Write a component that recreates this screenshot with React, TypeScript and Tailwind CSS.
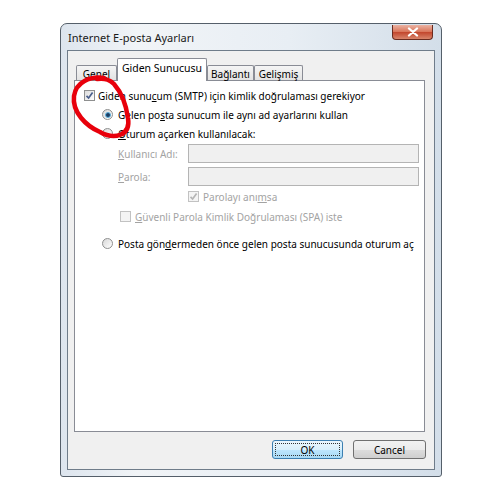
import React from 'react';

function CheckBox({ checked, disabled }: { checked?: boolean; disabled?: boolean }) {
  return (
    <span
      className={`flex h-[11px] w-[11px] shrink-0 items-center justify-center border ${
        disabled ? 'border-[#c2c2c2] bg-[#f4f4f4]' : 'border-[#8e8f8f] bg-[linear-gradient(135deg,#dcdcdc,#ffffff)]'
      }`}
    >
      {checked && (
        <svg width="9" height="9" viewBox="0 0 9 9">
          <path
            d="M1.5 4.8 L3.6 7 L7.6 1.6"
            fill="none"
            stroke={disabled ? '#b5b5b5' : '#4a5f8c'}
            strokeWidth="1.7"
          />
        </svg>
      )}
    </span>
  );
}

function Radio({ checked }: { checked?: boolean }) {
  return (
    <span className="flex h-[11px] w-[11px] shrink-0 items-center justify-center rounded-full border border-[#8e8f8f] bg-[linear-gradient(135deg,#d8d8d8,#ffffff)]">
      {checked && (
        <span className="h-[6px] w-[6px] rounded-full border border-[#5fb3e0] bg-[#1b3d63]" />
      )}
    </span>
  );
}

function Tab({ label, active, w }: { label: string; active?: boolean; w: string }) {
  if (active) {
    return (
      <div
        className={`${w} relative z-10 -mb-px flex h-[23px] items-start justify-center rounded-t-[2px] border border-b-0 border-[#898c95] bg-white pt-[4px] text-[10.5px]`}
      >
        {label}
      </div>
    );
  }
  return (
    <div
      className={`${w} flex h-[15px] items-center justify-center rounded-t-[2px] border border-b-0 border-[#898c95] bg-[linear-gradient(#f5f5f5,#e3e3e3)] pt-px`}
    >
      {label}
    </div>
  );
}

export default function App() {
  return (
    <div className="relative h-[500px] w-[500px] bg-white pl-[60px] pt-[23px] font-['Noto_Sans',sans-serif] text-[10px] leading-none text-black">
      <div className="flex h-[454px] w-[382px] flex-col rounded-t-[7px] rounded-b-[3px] border border-[#555f6a] bg-[linear-gradient(90deg,#dde5ee,#f1f4f7_20%,#e8eef4_60%,#d3dee9)]">
        {/* title bar */}
        <div className="flex h-[26px] items-start justify-between pl-[7px]">
          <span className="mt-[8px] text-[11px] text-[#1a1a1a]">Internet E-posta Ayarları</span>
          <div className="mr-[8px] mt-px flex h-[15px] w-[41px] items-center justify-center rounded-b-[4px] border border-t-0 border-[#6a2b1f] bg-[linear-gradient(#eab2a2,#d97358_50%,#c2452c_51%,#d9856b)]">
            <svg width="12" height="10" viewBox="0 0 12 10">
              <path d="M2 1.5 L10 8.5 M10 1.5 L2 8.5" stroke="#ffffff" strokeWidth="2.3" strokeLinecap="round" />
            </svg>
          </div>
        </div>

        {/* body */}
        <div className="mx-[6px] mb-[6px] flex-1 border border-[#6f7c8a] bg-[#f0f0f0] px-[6px] pt-[7px]">
          <div className="ml-[2px] flex h-[22px] items-end">
            <Tab label="Genel" w="w-[41px]" />
            <Tab label="Giden Sunucusu" active w="w-[90px]" />
            <Tab label="Bağlantı" w="w-[47px]" />
            <Tab label="Gelişmiş" w="w-[49px]" />
          </div>

          <div className="flex h-[352px] w-[351px] flex-col whitespace-nowrap border border-[#898c95] bg-white pl-[9px] pt-[5px]">
            <div className="flex h-[19px] items-center gap-[3px]">
              <CheckBox checked />
              <span>
                Giden sunu<u>c</u>um (SMTP) için kimlik doğrulaması gerekiyor
              </span>
            </div>
            <div className="ml-[18px] flex h-[19px] items-center gap-[5px]">
              <Radio checked />
              <span>
                Gelen po<u>s</u>ta sunucum ile aynı ad ayarlarını kullan
              </span>
            </div>
            <div className="ml-[18px] flex h-[19px] items-center gap-[5px]">
              <Radio />
              <span>
                <u>O</u>turum açarken kullanılacak:
              </span>
            </div>
            <div className="ml-[34px] mt-px flex h-[19px] items-center text-[#a3a3a3]">
              <span className="w-[70px]">
                <u>K</u>ullanıcı Adı:
              </span>
              <div className="h-[19px] w-[231px] border border-[#b4b4b4] bg-[#f0f0f0]" />
            </div>
            <div className="ml-[34px] mt-[4px] flex h-[19px] items-center text-[#a3a3a3]">
              <span className="w-[70px]">
                <u>P</u>arola:
              </span>
              <div className="h-[19px] w-[231px] border border-[#b4b4b4] bg-[#f0f0f0]" />
            </div>
            <div className="ml-[104px] mt-px flex h-[19px] items-center gap-[4px] text-[#a3a3a3]">
              <CheckBox checked disabled />
              <span>
                Parolayı anı<u>m</u>sa
              </span>
            </div>
            <div className="ml-[36px] mt-px flex h-[19px] items-center gap-[4px] text-[#a3a3a3]">
              <CheckBox disabled />
              <span>
                <u>G</u>üvenli Parola Kimlik Doğrulaması (SPA) iste
              </span>
            </div>
            <div className="ml-[18px] mt-[8px] flex h-[19px] items-center gap-[5px]">
              <Radio />
              <span>
                Posta gön<u>d</u>ermeden önce gelen posta sunucusunda oturum aç
              </span>
            </div>
          </div>

          <div className="mr-[2px] mt-[8px] flex justify-end gap-[10px]">
            <button className="flex h-[19px] w-[71px] items-center justify-center rounded-[3px] border border-[#3c7fb1] bg-[linear-gradient(#eaf6fd,#d9f0fc_50%,#bee6fd_51%,#a7d9f5)] p-[2px]">
              <span className="flex h-full w-full items-center justify-center border border-dotted border-[#333]">OK</span>
            </button>
            <button className="flex h-[19px] w-[73px] items-center justify-center rounded-[3px] border border-[#707070] bg-[linear-gradient(#f2f2f2,#ebebeb_50%,#dddddd_51%,#cfcfcf)]">
              Cancel
            </button>
          </div>
        </div>
      </div>

      {/* hand-drawn red marker */}
      <svg className="pointer-events-none absolute left-0 top-0" width="500" height="500" viewBox="0 0 500 500">
        <path
          d="M104 78 C90 76 76 82 74 96 C72 112 86 126 100 132 C114 140 131 136 128 118 C126 104 121 92 114 84 C110 80 106 78 97 79"
          fill="none"
          stroke="#e8000b"
          strokeWidth="4.5"
          strokeLinecap="round"
        />
      </svg>
    </div>
  );
}
